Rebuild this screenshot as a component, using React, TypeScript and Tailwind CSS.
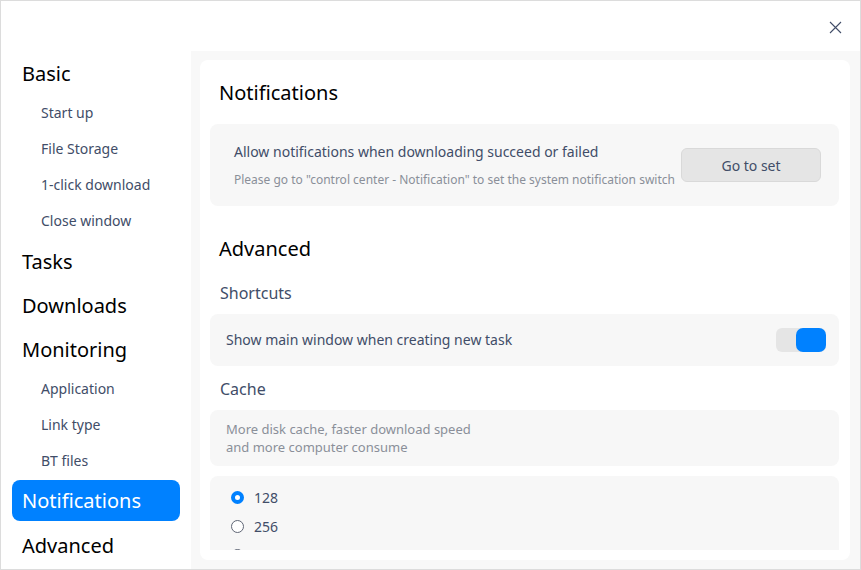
import React from "react";

const sections: { title: string; items?: string[]; active?: boolean }[] = [
  { title: "Basic", items: ["Start up", "File Storage", "1-click download", "Close window"] },
  { title: "Tasks" },
  { title: "Downloads" },
  { title: "Monitoring", items: ["Application", "Link type", "BT files"] },
  { title: "Notifications", active: true },
  { title: "Advanced" },
];

const Sidebar = () => (
  <div className="w-[190px] shrink-0 bg-white pl-[11px] pr-[11px] pt-px">
    {sections.map((s) => (
      <div key={s.title}>
        {s.active ? (
          <div className="mb-[3px] flex h-[41px] items-center rounded-lg bg-[#0081ff] pl-[10px] text-[20px] text-white">
            {s.title}
          </div>
        ) : (
          <div className="flex h-[44px] items-center pl-[10px] text-[20px] text-black">{s.title}</div>
        )}
        {s.items?.map((it) => (
          <div key={it} className="flex h-[36px] items-center pb-[4px] pl-[29px] text-[14px] text-[#414d68]">
            {it}
          </div>
        ))}
      </div>
    ))}
  </div>
);

const Radio = ({ checked, label }: { checked?: boolean; label: string }) => (
  <div className="flex h-[29px] items-center gap-[10px] text-[14px] text-[#414d68]">
    <span
      className={`block h-[13px] w-[13px] rounded-full ${checked ? "border-[4px] border-[#0081ff] bg-white" : "border border-[#5f6675] bg-white"}`}
    />
    {label}
  </div>
);

export default function App() {
  return (
    <div
      className="flex h-[570px] w-[861px] flex-col overflow-hidden border border-[#dcdcdc] bg-white"
      style={{ fontFamily: '"Noto Sans", "Open Sans", sans-serif' }}
    >
      <div className="flex h-[50px] shrink-0 items-center justify-end pr-[18px]">
        <svg width="13" height="13" viewBox="0 0 13 13" className="mt-[2px]">
          <path d="M1 1 L12 12 M12 1 L1 12" stroke="#414d68" strokeWidth="1.1" fill="none" />
        </svg>
      </div>
      <div className="flex min-h-0 flex-1">
        <Sidebar />
        <div className="min-h-0 flex-1 bg-[#f8f8f8] py-[9px] pl-[9px] pr-[10px]">
          <div className="h-full overflow-hidden rounded-lg bg-white pb-[10px]">
            <div className="h-full overflow-hidden pl-[10px] pr-[11px]">
              <div className="flex h-[47px] items-end pl-[9px] text-[20px] leading-[28px] text-black">
                Notifications
              </div>
              <div className="mt-[17px] flex h-[82px] items-center justify-between rounded-lg bg-[#f7f7f7] pl-[24px] pr-[18px]">
                <div>
                  <div className="text-[14px] leading-[20px] text-[#414d68]">
                    Allow notifications when downloading succeed or failed
                  </div>
                  <div className="mt-[10px] text-[12px] leading-[16px] text-[#8a8f99]">
                    Please go to "control center - Notification" to set the system notification switch
                  </div>
                </div>
                <button className="h-[34px] w-[140px] rounded-md border border-[#d9d9d9] bg-[#e5e5e5] text-[14px] text-[#414d68]">
                  Go to set
                </button>
              </div>
              <div className="mt-[29px] pl-[9px] text-[20px] leading-[28px] text-black">Advanced</div>
              <div className="mt-[19px] pl-[10px] text-[16px] leading-[22px] text-[#414d68]">Shortcuts</div>
              <div className="mt-[10px] flex h-[52px] items-center justify-between rounded-lg bg-[#f7f7f7] pb-px pl-[16px] pr-[13px]">
                <span className="text-[14px] text-[#414d68]">Show main window when creating new task</span>
                <div className="flex h-[24px] w-[50px] justify-end rounded-md bg-[#e5e5e5]">
                  <div className="h-[24px] w-[30px] rounded-[7px] bg-[#0081ff]" />
                </div>
              </div>
              <div className="mt-[12px] pl-[10px] text-[16px] leading-[22px] text-[#414d68]">Cache</div>
              <div className="mt-[10px] flex h-[56px] flex-col justify-center rounded-lg bg-[#f7f7f7] pl-[16px] text-[13px] leading-[18px] text-[#8a8f99]">
                <div>More disk cache, faster download speed</div>
                <div>and more computer consume</div>
              </div>
              <div className="mt-[10px] rounded-lg bg-[#f7f7f7] pl-[21px] pt-[7px]">
                <Radio checked label="128" />
                <Radio label="256" />
                <Radio label="512" />
                <Radio label="1024" />
              </div>
            </div>
          </div>
        </div>
      </div>
    </div>
  );
}
